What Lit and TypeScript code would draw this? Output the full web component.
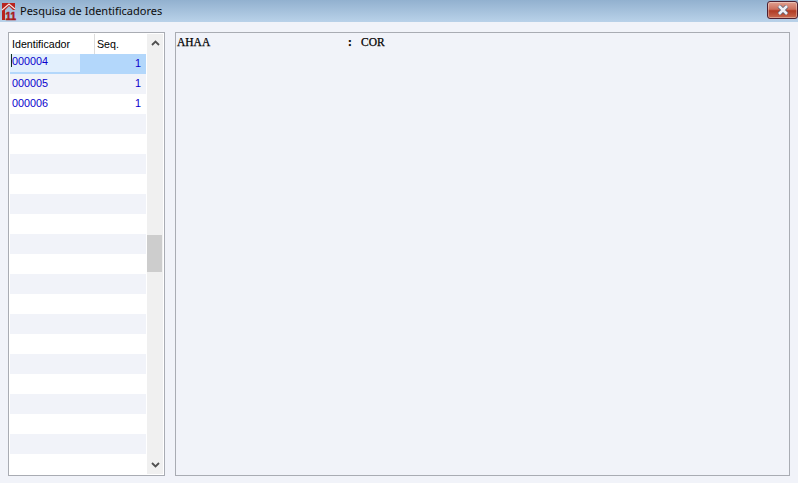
import { LitElement, html, css } from "lit";
import { customElement } from "lit/decorators.js";

const ROWS: { id: string; seq: string }[] = [
  { id: "000004", seq: "1" },
  { id: "000005", seq: "1" },
  { id: "000006", seq: "1" },
  ...Array.from({ length: 17 }, () => ({ id: "", seq: "" })),
];

@customElement("app-root")
export class AppRoot extends LitElement {
  static styles = css`
    :host { display: block; width: 798px; height: 483px; overflow: hidden; background: #f1f3f9; font-family: "Liberation Sans", Arial, sans-serif; font-size: 11px; color: #000; }
    .title { height: 22px; display: flex; align-items: center; background: linear-gradient(#92b1cf, #b9d2e9); box-sizing: border-box; padding-left: 1px; }
    .logo { width: 15px; height: 19px; flex: none; margin-right: 4px; margin-top: 1px; overflow: visible; }
    .logo-num { font-family: "Liberation Sans", sans-serif; font-weight: 700; font-size: 10px; fill: #a81c1a; stroke: #a81c1a; stroke-width: 0.5px; }
    .title-text { font-family: "Noto Sans", sans-serif; font-size: 11px; color: #0c0c0c; flex: 1; margin-top: -1px; }
    .close { width: 31px; height: 18px; margin: 0 0 3px 0; flex: none; box-sizing: border-box; border: 1px solid #4d2030; border-radius: 3px; background: linear-gradient(#e0a090 0, #cc6f5c 45%, #b03a24 55%, #c86a50 100%); display: flex; align-items: center; justify-content: center; box-shadow: inset 0 0 0 1px rgba(255,255,255,.35); }
    .body { display: flex; gap: 10px; padding: 10px 8px 0 8px; }
    .list { width: 157px; height: 444px; flex: none; box-sizing: border-box; border: 1px solid #a9acb3; background: #fff; display: flex; padding: 1px; }
    .table { width: 136px; flex: none; }
    .head { display: flex; height: 20px; align-items: center; font-size: 10.67px; background: #fff; }
    .h1 { width: 85px; height: 100%; box-sizing: border-box; padding-left: 2px; border-right: 1px solid #dcdcdc; line-height: 20px; }
    .h2 { padding-left: 2px; line-height: 20px; }
    .row { display: flex; height: 20px; font-size: 10.8px; color: #0a00cc; background: #fff; position: relative; }
    .row.tint { background: #f1f3f9; }
    .row.sel { background: #b3d7fb; }
    .id { width: 70px; height: 100%; padding-left: 2px; box-sizing: border-box; line-height: 18px; }
    .sel .id { height: 18px; line-height: 15px; background: #e2effd; }
    .seq { flex: 1; text-align: right; padding-right: 5px; line-height: 18px; }
    .caret { position: absolute; left: 1px; top: 0; width: 1px; height: 13px; background: #103020; }
    .scroll { width: 16px; margin-left: 1px; flex: none; height: 100%; background: #f0f0f0; display: flex; flex-direction: column; align-items: center; position: relative; }
    .arrow { height: 18px; width: 100%; display: flex; align-items: center; justify-content: center; flex: none; }
    .thumb { position: absolute; left: 0; top: 201px; width: 15px; height: 37px; background: #cdcdcd; }
    .spacer { flex: 1; }
    .detail { width: 616px; height: 444px; box-sizing: border-box; border: 1px solid #a9acb3; background: #f1f3f9; padding: 1px 1px; }
    .line { display: flex; font-family: "Liberation Serif", "Times New Roman", serif; font-size: 11.5px; line-height: 16px; color: #000; -webkit-text-stroke: 0.25px #000; }
    .key { width: 171px; }
    .sep { width: 13px; font-weight: 700; }
  `;

  render() {
    return html`
      <div class="title">
        <svg class="logo" viewBox="0 0 15 19">
          <path d="M1 1h13v7h-2L8 4 4 8v10H1z" fill="#b8241f" />
          <path d="M1 8L8 2l6 5" fill="none" stroke="#f5e4e0" stroke-width="1.1" />
          <text class="logo-num" x="4.5" y="17.5">11</text>
        </svg>
        <span class="title-text">Pesquisa de Identificadores</span>
        <div class="close">
          <svg width="14" height="10" viewBox="0 0 14 10">
            <path d="M3 1l8 8M11 1L3 9" fill="none" stroke="#555a70" stroke-width="4" />
            <path d="M3 1l8 8M11 1L3 9" fill="none" stroke="#eef0f6" stroke-width="2.6" />
          </svg>
        </div>
      </div>
      <div class="body">
        <div class="list">
          <div class="table">
            <div class="head"><div class="h1">Identificador</div><div class="h2">Seq.</div></div>
            ${ROWS.map(
              (r, i) => html`
                <div class="row ${i === 0 ? "sel" : i % 2 === 1 ? "tint" : ""}">
                  <div class="id">${r.id}</div>
                  <div class="seq">${r.seq}</div>
                  ${i === 0 ? html`<div class="caret"></div>` : ""}
                </div>
              `
            )}
          </div>
          <div class="scroll">
            <div class="arrow">
              <svg width="9" height="6" viewBox="0 0 9 6"><path d="M1 5l3.5-3.5L8 5" fill="none" stroke="#505050" stroke-width="1.8" /></svg>
            </div>
            <div class="thumb"></div>
            <div class="spacer"></div>
            <div class="arrow">
              <svg width="9" height="6" viewBox="0 0 9 6"><path d="M1 1l3.5 3.5L8 1" fill="none" stroke="#505050" stroke-width="1.8" /></svg>
            </div>
          </div>
        </div>
        <div class="detail">
          <div class="line"><span class="key">AHAA</span><span class="sep">:</span><span>COR</span></div>
        </div>
      </div>
    `;
  }
}
